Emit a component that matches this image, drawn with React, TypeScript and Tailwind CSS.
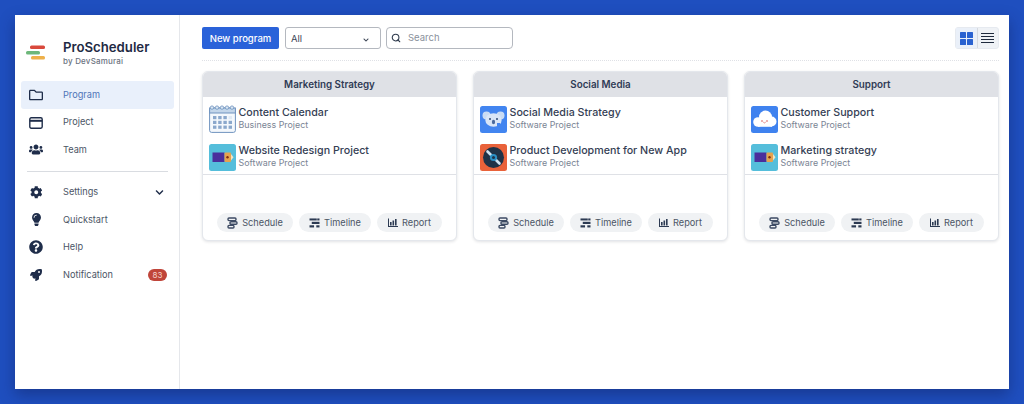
import React from "react";
import { FaRegFolder, FaUsers, FaCog, FaLightbulb, FaQuestionCircle, FaRocket, FaChevronDown } from "react-icons/fa";
import { Search } from "lucide-react";

function Logo() {
  return (
    <svg width="20" height="16" viewBox="0 0 20 16" className="shrink-0">
      <rect x="4" y="0.5" width="15" height="3.5" rx="1.5" fill="#d9493c" />
      <rect x="0" y="6" width="14" height="3.5" rx="1.5" fill="#6db77a" />
      <rect x="5" y="11" width="14" height="3.5" rx="1.5" fill="#eeb04a" />
    </svg>
  );
}

function WindowIcon() {
  return (
    <svg width="14" height="12" viewBox="0 0 14 12" fill="none" stroke="#1f2d4a" strokeWidth="1.4" className="mt-[1px]">
      <rect x="0.8" y="0.8" width="12.4" height="10.4" rx="1.4" />
      <path d="M0.8 3.8 H13.2" strokeWidth="2" />
    </svg>
  );
}

function ScheduleIcon() {
  return (
    <svg width="11" height="12" viewBox="0 0 11 12" fill="none" stroke="#3c4a63" strokeWidth="1.4">
      <rect x="1" y="1" width="8" height="2.6" rx="1" />
      <rect x="3" y="4.7" width="7" height="2.6" rx="1" />
      <rect x="1" y="8.4" width="6" height="2.6" rx="1" />
    </svg>
  );
}

function TimelineIcon() {
  return (
    <svg width="11" height="10" viewBox="0 0 12 11" fill="#2c3a52">
      <rect x="0.5" y="0.5" width="8" height="2.2" />
      <rect x="9" y="0.5" width="2.5" height="2.2" />
      <rect x="3" y="4.2" width="8.5" height="2.4" />
      <rect x="0.5" y="8" width="5" height="2.4" />
      <rect x="8" y="8" width="3.5" height="2.4" />
    </svg>
  );
}

function ReportIcon() {
  return (
    <svg width="10" height="9" viewBox="0 0 10 9" fill="#2c3a52">
      <rect x="0" y="0.5" width="1" height="8.5" />
      <rect x="0" y="8" width="10" height="1" />
      <rect x="2" y="4" width="1.6" height="3.5" />
      <rect x="4.5" y="2.5" width="1.6" height="5" />
      <rect x="7" y="1" width="1.6" height="6.5" />
    </svg>
  );
}

function CalendarIcon() {
  const dots = [];
  for (let r = 0; r < 3; r++) for (let c = 0; c < 4; c++) dots.push(<rect key={`${r}-${c}`} x={4 + c * 5.2} y={11 + r * 4.8} width="3.4" height="3.2" fill={r === 0 && c === 3 ? "#dfe9f4" : "#8ba8cc"} />);
  return (
    <svg width="27" height="28" viewBox="0 0 27 28" className="shrink-0">
      <rect x="0.6" y="3" width="25.8" height="24.4" rx="2" fill="#f4f8fc" stroke="#6f93bf" strokeWidth="1" />
      <rect x="0.6" y="3" width="25.8" height="5" fill="#c3d6ea" stroke="#6f93bf" strokeWidth="1" />
      {[3, 8, 13, 18, 23].map((x) => <circle key={x} cx={x} cy="2.6" r="1.7" fill="#dce8f4" stroke="#6f93bf" strokeWidth="0.8" />)}
      {dots}
    </svg>
  );
}

function RocketTile() {
  return (
    <svg width="27" height="27" viewBox="0 0 27 27" className="shrink-0">
      <rect width="27" height="27" rx="2.5" fill="#55bedb" />
      <rect x="3.5" y="8.5" width="12" height="9.5" fill="#4a2e9c" />
      <rect x="15.5" y="8.5" width="6.5" height="9.5" rx="1" fill="#e6a24e" />
      <path d="M22 10 L24.5 13.2 L22 16.5 Z" fill="#f5e3c0" />
      <circle cx="18.5" cy="13.2" r="1.2" fill="#7c2d12" />
    </svg>
  );
}

function KoalaTile() {
  return (
    <svg width="27" height="27" viewBox="0 0 27 27" className="shrink-0">
      <rect width="27" height="27" rx="2.5" fill="#4285f0" />
      <circle cx="6.5" cy="9.5" r="4" fill="#c9dcf4" />
      <circle cx="20.5" cy="9.5" r="4" fill="#c9dcf4" />
      <ellipse cx="13.5" cy="14" rx="8.2" ry="6.8" fill="#d9e6f7" />
      <circle cx="10" cy="13" r="1" fill="#2f4a75" />
      <circle cx="17" cy="13" r="1" fill="#2f4a75" />
      <ellipse cx="13.5" cy="16" rx="1.6" ry="2.2" fill="#4a6a9c" />
      <rect x="17" y="17" width="3" height="3" fill="#4285f0" />
    </svg>
  );
}

function DiscTile() {
  return (
    <svg width="27" height="27" viewBox="0 0 27 27" className="shrink-0">
      <rect width="27" height="27" rx="2.5" fill="#e9623a" />
      <circle cx="13.5" cy="13.5" r="10.5" fill="#1f3247" />
      <path d="M7.5 7.5 L19.5 19.5" stroke="#cfe3f2" strokeWidth="2.6" strokeLinecap="round" />
      <circle cx="13.5" cy="13.5" r="3.6" fill="#2b8fc4" />
      <circle cx="13.5" cy="13.5" r="1.5" fill="#1f3247" />
    </svg>
  );
}

function CloudTile() {
  return (
    <svg width="27" height="27" viewBox="0 0 27 27" className="shrink-0">
      <rect width="27" height="27" rx="2.5" fill="#3f82ef" />
      <circle cx="7" cy="16" r="4.8" fill="#ffffff" />
      <circle cx="14.5" cy="11" r="6.5" fill="#ffffff" />
      <circle cx="20.5" cy="15.5" r="5" fill="#ffffff" />
      <rect x="7" y="14" width="14" height="6.8" fill="#ffffff" />
      <circle cx="11" cy="15" r="0.8" fill="#d9534f" />
      <circle cx="16" cy="15" r="0.8" fill="#d9534f" />
      <path d="M12.3 16.2 Q13.5 17.6 14.7 16.2" stroke="#d9534f" strokeWidth="0.7" fill="none" />
    </svg>
  );
}

function Project({ icon, name, type }: { icon: React.ReactNode; name: string; type: string }) {
  return (
    <div className="flex items-center gap-[3px] h-[28px]">
      {icon}
      <div className="flex flex-col pb-[2px]">
        <span className="text-[10.7px] leading-[13px] font-medium text-[#344054]">{name}</span>
        <span className="text-[8.9px] leading-[11px] text-[#7a8494]">{type}</span>
      </div>
    </div>
  );
}

function Pill({ icon, label, w }: { icon: React.ReactNode; label: string; w: string }) {
  return (
    <div className={`flex items-center justify-center gap-[4px] h-[19px] rounded-full bg-[#f0f2f4] text-[9.2px] text-[#4b5565] ${w}`}>
      {icon}
      <span>{label}</span>
    </div>
  );
}

function Card({ title, items }: { title: string; items: { icon: React.ReactNode; name: string; type: string }[] }) {
  return (
    <div className="flex flex-col h-[170px] rounded-[6px] bg-white border border-[#e4e7ec] shadow-[0_1px_3px_rgba(16,24,40,0.12)] overflow-hidden">
      <div className="h-[25px] shrink-0 flex items-center justify-center bg-[#dfe1e6] pt-[2px] text-[9.8px] font-semibold text-[#2f3b55]">{title}</div>
      <div className="flex flex-col gap-[10px] pt-[8px] pl-[5.5px] pb-[3px] border-b border-[#dfe1e6]">
        {items.map((it) => <Project key={it.name} {...it} />)}
      </div>
      <div className="flex-1 flex items-end justify-center gap-[6px] pb-[8px]">
        <Pill icon={<ScheduleIcon />} label="Schedule" w="w-[76px]" />
        <Pill icon={<TimelineIcon />} label="Timeline" w="w-[72px]" />
        <Pill icon={<ReportIcon />} label="Report" w="w-[65px]" />
      </div>
    </div>
  );
}

function NavItem({ icon, label, active, right }: { icon: React.ReactNode; label: string; active?: boolean; right?: React.ReactNode }) {
  return (
    <div className={`flex items-center h-[27.5px] rounded-[3px] pl-[8px] pr-[7px] ${active ? "bg-[#e9f0fb]" : ""}`}>
      <span className="w-[14px] flex justify-center text-[#1f2d4a] text-[14px] shrink-0">{icon}</span>
      <span className={`ml-[20px] text-[9.2px] ${active ? "text-[#4f74b8]" : "text-[#4b5565]"}`}>{label}</span>
      {right && <span className="ml-auto">{right}</span>}
    </div>
  );
}

export default function App() {
  const S = "Software Project";
  return (
    <div className="w-[1024px] h-[404px] overflow-hidden bg-[#1f4fbf] px-[15px] pt-[15px] font-['Inter',sans-serif]">
      <div className="flex h-[374px] w-[994px] bg-white shadow-[0_6px_14px_rgba(15,30,90,0.45)]">
        <aside className="w-[165px] shrink-0 border-r border-[#e5e7eb] pt-[26px] px-[6px]">
          <div className="flex items-center pl-[5px] h-[23px]">
            <Logo />
            <div className="ml-[17px] flex flex-col">
              <span className="text-[13.2px] leading-[16px] font-semibold text-[#1f2a44]">ProScheduler</span>
              <span className="mt-[1px] text-[8px] leading-[11px] font-medium tracking-[0.2px] text-[#6b7280]">by DevSamurai</span>
            </div>
          </div>
          <nav className="mt-[17px] w-[153px]">
            <NavItem active icon={<FaRegFolder className="text-[16px]" />} label="Program" />
            <NavItem icon={<WindowIcon />} label="Project" />
            <NavItem icon={<FaUsers className="text-[15px]" />} label="Team" />
            <div className="my-[7px] mx-[6px] border-t border-[#d9dce1]" />
            <NavItem icon={<FaCog className="text-[12.5px]" />} label="Settings" right={<FaChevronDown className="text-[9px] text-[#1f2d4a] mr-[3px]" />} />
            <NavItem icon={<FaLightbulb className="text-[13px]" />} label="Quickstart" />
            <NavItem icon={<FaQuestionCircle className="text-[14px]" />} label="Help" />
            <NavItem icon={<FaRocket className="text-[12px]" />} label="Notification" right={<span className="flex items-center justify-center w-[19px] h-[12px] rounded-full bg-[#c0453a] text-[8px] text-[#f6d5cf]">83</span>} />
          </nav>
        </aside>
        <main className="flex-1 pt-[12px] pl-[22px] pr-[10px]">
          <div className="flex items-center h-[22px]">
            <button className="w-[77px] h-[22px] rounded-[2px] bg-[#2a62d9] text-white text-[9.5px] font-medium pt-[2px]">New program</button>
            <div className="ml-[6px] w-[96px] h-[22px] rounded-[3px] border border-[#b4b8bf] flex items-center pl-[5px] pr-[6px] pt-[3px] text-[9.5px] text-[#3c4656]">
              <span>All</span>
              <FaChevronDown className="ml-auto text-[6px] mr-[5px]" />
            </div>
            <div className="ml-[5px] w-[127px] h-[22px] rounded-[4px] border border-[#b4b8bf] flex items-center px-[4px] text-[9.5px] text-[#8a919c]">
              <Search size={10} strokeWidth={2.6} className="text-[#2f3b4d]" />
              <span className="ml-[7px] pt-[1px]">Search</span>
            </div>
            <div className="ml-auto flex h-[22px] w-[44px] rounded-[3px] bg-[#eff2f6] border border-[#e6eaf0]">
              <div className="flex-1 flex items-center justify-center border-r border-[#d5d9df] bg-[#eaf0f9]">
                <div className="grid grid-cols-2 gap-[1px]">
                  <div className="w-[6px] h-[6px] rounded-[0.5px] bg-[#2a62d0]" />
                  <div className="w-[6px] h-[6px] rounded-[0.5px] bg-[#2a62d0]" />
                  <div className="w-[6px] h-[6px] rounded-[0.5px] bg-[#2a62d0]" />
                  <div className="w-[6px] h-[6px] rounded-[0.5px] bg-[#2a62d0]" />
                </div>
              </div>
              <div className="flex-1 flex flex-col items-center justify-center gap-[1.5px]">
                <div className="w-[13px] h-[1.5px] bg-[#1f2a3d]" />
                <div className="w-[13px] h-[1.5px] bg-[#1f2a3d]" />
                <div className="w-[13px] h-[1.5px] bg-[#1f2a3d]" />
                <div className="w-[13px] h-[1.5px] bg-[#1f2a3d]" />
              </div>
            </div>
          </div>
          <div className="mt-[11px] border-t border-dotted border-[#dfe1e6]" />
          <div className="mt-[10px] grid grid-cols-3 gap-[16px]">
            <Card title="Marketing Strategy" items={[{ icon: <CalendarIcon />, name: "Content Calendar", type: "Business Project" }, { icon: <RocketTile />, name: "Website Redesign Project", type: S }]} />
            <Card title="Social Media" items={[{ icon: <KoalaTile />, name: "Social Media Strategy", type: S }, { icon: <DiscTile />, name: "Product Development for New App", type: S }]} />
            <Card title="Support" items={[{ icon: <CloudTile />, name: "Customer Support", type: S }, { icon: <RocketTile />, name: "Marketing strategy", type: S }]} />
          </div>
        </main>
      </div>
    </div>
  );
}
